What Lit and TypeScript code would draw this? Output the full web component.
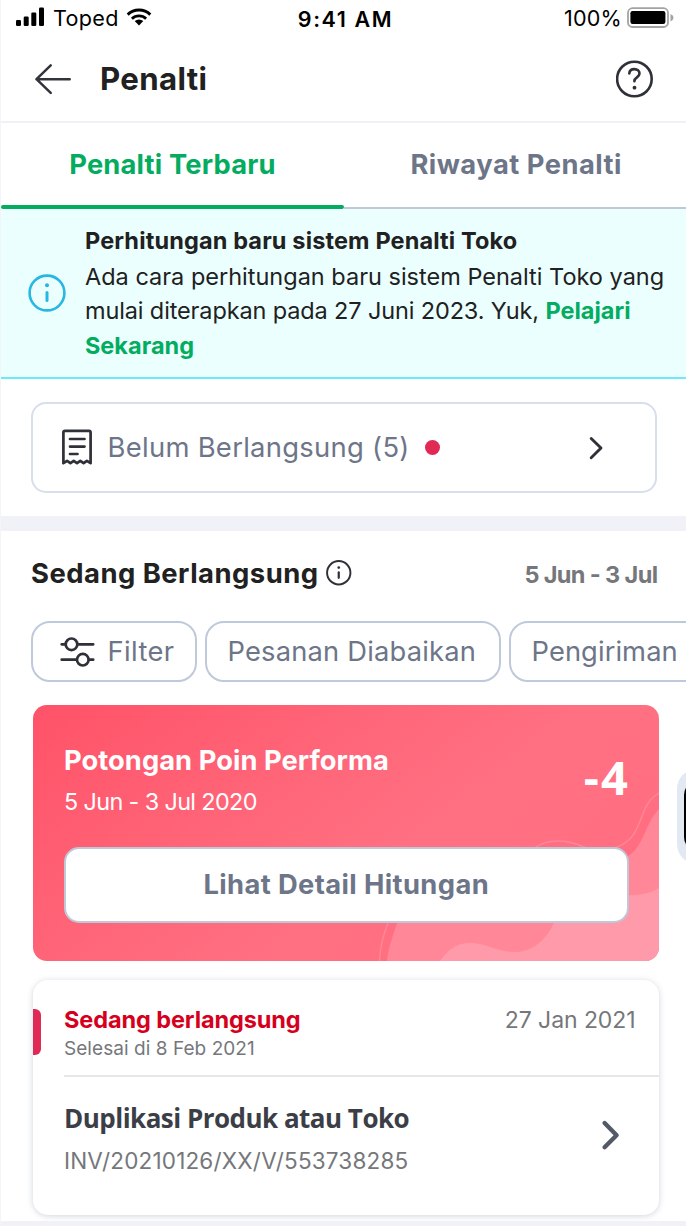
import { LitElement, html, css, svg } from 'lit';
import { customElement, property } from 'lit/decorators.js';

@customElement('status-bar')
class StatusBar extends LitElement {
  static styles = css`
    :host { display: grid; grid-template-columns: 1fr auto 1fr; height: 36px; color: #000; font-size: 21.6px; line-height: 36px; }
    .side { display: flex; align-items: flex-start; }
    .left { padding-left: 15px; }
    .right { justify-content: flex-end; padding-right: 12px; }
    .signal { margin: 7px 8px 0 0; }
    .wifi { margin: 8px 0 0 7px; }
    .carrier { letter-spacing: 0.3px; }
    .time { font-size: 21.5px; font-weight: 600; letter-spacing: 1.6px; line-height: 39px; margin-left: 4px; }
    .battery { margin: 7px 0 0 5px; }
    .percent { letter-spacing: 0.2px; }
    svg { display: block; flex: none; }
  `;
  render() {
    return html`
      <div class="side left">
        <svg class="signal" width="29" height="19" viewBox="0 0 29 19">
          <rect x="0" y="13" width="5" height="6" rx="1.2" />
          <rect x="7.7" y="9.5" width="5" height="9.5" rx="1.2" />
          <rect x="15.3" y="5.5" width="5" height="13.5" rx="1.2" />
          <rect x="23" y="0.5" width="5" height="18.5" rx="1.2" />
        </svg>
        <span class="carrier">Toped</span>
        <svg class="wifi" width="26" height="18" viewBox="0 0 26 18">
          <g fill="none" stroke="#000" stroke-width="2.9">
            <path d="M1.7 6.6a16.2 16.2 0 0 1 22.6 0" />
            <path d="M5.9 10.7a10.4 10.4 0 0 1 14.2 0" />
          </g>
          <path d="M13 17.4 8.7 13.1a6.3 6.3 0 0 1 8.6 0Z" />
        </svg>
      </div>
      <div class="time">9:41 AM</div>
      <div class="side right">
        <span class="percent">100%</span>
        <svg class="battery" width="47" height="21" viewBox="0 0 47 21">
          <rect x="1" y="1.2" width="40" height="18.8" rx="4.5" fill="none" stroke="#a3a3a3" stroke-width="1.8" />
          <rect x="3.4" y="4" width="35" height="13" rx="2.2" />
          <path d="M43.5 7v7.4q3-1.3 3-3.7t-3-3.7Z" fill="#a3a3a3" />
        </svg>
      </div>
    `;
  }
}

@customElement('page-header')
class PageHeader extends LitElement {
  static styles = css`
    :host { display: flex; align-items: center; height: 85px; border-bottom: 2px solid #f0f1f7; padding: 0 32px 0 34px; }
    h1 { flex: 1; margin: 1.5px 0 0 28px; font-size: 31.2px; font-weight: 700; letter-spacing: 0.35px; line-height: 40px; color: #212121; }
    svg { display: block; }
  `;
  render() {
    return html`
      <svg width="37" height="32" viewBox="0 0 37 32" fill="none" stroke="#31353b" stroke-width="2.5" stroke-linecap="round" stroke-linejoin="round">
        <path d="M34.7 16.2H1.5M15.7 2.3 1.5 16.2l14.2 13.7" />
      </svg>
      <h1>Penalti</h1>
      <svg width="38" height="38" viewBox="0 0 38 38" fill="none" stroke="#2e3137" stroke-width="2.6" stroke-linecap="round" stroke-linejoin="round">
        <circle cx="18.4" cy="19" r="17.3" />
        <path d="M13.3 13.4c.2-2.7 2.3-4.3 5-4.3 3 0 5.2 1.8 5.2 4.5 0 4.1-5.1 3.5-5.1 7.6" />
        <circle cx="18.5" cy="27.7" r="1.9" fill="#2e3137" stroke="none" />
      </svg>
    `;
  }
}

@customElement('tab-bar')
class TabBar extends LitElement {
  @property({ type: Array }) tabs: string[] = [];
  static styles = css`
    :host { display: grid; grid-template-columns: 343px 342px; height: 86px; }
    .tab { box-sizing: border-box; padding: 22.4px 0 0 2.4px; border-bottom: 2px solid #bfc7d9; text-align: center; font-size: 27.3px; line-height: 40px; font-weight: 700; letter-spacing: 0.5px; color: #6d7588; display: flex; flex-direction: column; justify-content: space-between; }
    .active { padding-left: 0; color: #03ac5f; letter-spacing: 0.2px; border-bottom: 0; }
    .active::after { content: ''; height: 4px; border-radius: 2px; background: #03ac5f; }
  `;
  render() {
    return html`${this.tabs.map((t, i) => html`<div class="tab ${i === 0 ? 'active' : ''}">${t}</div>`)}`;
  }
}

const infoGlyph = (size: number, stroke: number, color: string) => svg`
  <svg width=${size} height=${size} viewBox="0 0 38 38" fill="none" stroke=${color}>
    <circle cx="19" cy="19" r="17.4" stroke-width=${stroke} />
    <path d="M19 18.6v8" stroke-width=${stroke + 0.4} stroke-linecap="round" />
    <circle cx="19" cy="11.3" r="2" fill=${color} stroke="none" />
  </svg>`;

@customElement('info-banner')
class InfoBanner extends LitElement {
  static styles = css`
    :host { box-sizing: border-box; display: flex; align-items: center; height: 170px; padding: 0 0 0 26.6px; background: #ebffff; border-bottom: 2px solid #6ee8fb; color: #212121; font-size: 23.5px; }
    svg { display: block; flex: none; }
    .copy { margin-left: 19.4px; white-space: nowrap; line-height: 34.2px; }
    .title { font-weight: 700; letter-spacing: 0.14px; line-height: 36px; margin-bottom: 1px; }
    .second { letter-spacing: -0.13px; }
    b { font-weight: 700; color: #03ac5f; letter-spacing: 0; }
  `;
  render() {
    return html`
      ${infoGlyph(38, 2.6, '#27b7e3')}
      <div class="copy">
        <div class="title">Perhitungan baru sistem Penalti Toko</div>
        <div>Ada cara perhitungan baru sistem Penalti Toko yang</div>
        <div class="second">mulai diterapkan pada 27 Juni 2023. Yuk, <b>Pelajari</b></div>
        <div><b>Sekarang</b></div>
      </div>
    `;
  }
}

@customElement('upcoming-row')
class UpcomingRow extends LitElement {
  static styles = css`
    :host { box-sizing: border-box; display: flex; align-items: center; height: 91px; margin: 23px 29px 23px 30px; padding: 0 51px 0 28px; border: 2px solid #d6dfeb; border-radius: 15px; color: #6d7588; font-size: 27.4px; line-height: 40px; }
    svg { display: block; flex: none; }
    .receipt, .label { margin-bottom: 1px; }
    .label { margin-left: 14.5px; letter-spacing: 0.29px; }
    .dot { width: 15.5px; height: 15.5px; margin-left: 15px; border-radius: 50%; background: #e02954; }
    .chevron { margin-left: auto; }
  `;
  render() {
    return html`
      <svg class="receipt" width="32" height="38" viewBox="0 0 32 38" fill="none" stroke="#2e3137" stroke-width="2.7" stroke-linecap="round" stroke-linejoin="round">
        <path d="M2.4 35.2V4.4q0-1.6 1.6-1.6h24q1.6 0 1.6 1.6v30.8l-3.7-2.4-3.3 2.4-3.3-2.4-3.3 2.4-3.3-2.4-3.3 2.4-3.3-2.4Z" />
        <path d="M9 11h14.5M9 18.6h14.5M9 26h7.5" />
      </svg>
      <span class="label">Belum Berlangsung (5)</span>
      <span class="dot"></span>
      <svg class="chevron" width="16" height="24" viewBox="0 0 16 24" fill="none" stroke="#2e3137" stroke-width="2.9" stroke-linecap="round" stroke-linejoin="round">
        <path d="M3.2 2.5 13 12 3.2 21.7" />
      </svg>
    `;
  }
}

@customElement('ongoing-heading')
class OngoingHeading extends LitElement {
  static styles = css`
    :host { box-sizing: border-box; display: flex; align-items: center; height: 86px; padding: 0 28.5px 2px 30px; }
    h2 { margin: 0 7.5px 0 0; font-size: 27.4px; line-height: 40px; letter-spacing: 0.49px; color: #212121; }
    svg { display: block; }
    .range { margin-left: auto; padding-top: 3px; font-size: 23.5px; line-height: 30px; font-weight: 700; letter-spacing: -0.62px; color: #75777b; }
  `;
  render() {
    return html`<h2>Sedang Berlangsung</h2>${infoGlyph(25.5, 2.9, '#2e3137')}<span class="range">5 Jun - 3 Jul</span>`;
  }
}

@customElement('filter-chips')
class FilterChips extends LitElement {
  static styles = css`
    :host { display: flex; gap: 8px; margin: 4px 0 0 30px; overflow: hidden; }
    .chip { box-sizing: border-box; flex: none; display: flex; align-items: center; height: 61px; padding: 0 20.5px; border: 2px solid #bfc9dc; border-radius: 19px; font-size: 27.3px; letter-spacing: 0.2px; color: #6d7588; white-space: nowrap; }
    .filter { width: 166px; padding: 0 0 0 27px; letter-spacing: 0.38px; }
    .wide { width: 296px; }
    .last { width: 200px; letter-spacing: 0.09px; }
    svg { display: block; margin-right: 12.5px; }
  `;
  render() {
    return html`
      <div class="chip filter">
        <svg width="35" height="32" viewBox="0 0 35 32" fill="none" stroke="#2e3137" stroke-width="2.7" stroke-linecap="round">
          <path d="M1.7 8.3h4M17.3 8.3h15.9M1.7 23.7h15M29 23.7h4.2" />
          <circle cx="11.5" cy="8.3" r="5.8" /><circle cx="22.8" cy="23.7" r="5.8" />
        </svg>
        Filter
      </div>
      <div class="chip wide">Pesanan Diabaikan</div>
      <div class="chip last">Pengiriman</div>
    `;
  }
}

@customElement('score-card')
class ScoreCard extends LitElement {
  static styles = css`
    :host { position: relative; box-sizing: border-box; display: block; height: 256px; margin: 23px 27px 0 32px; padding: 35px 30.5px 0 31px; border-radius: 14px; overflow: hidden; background: linear-gradient(142deg, #ff5268 0%, #ff6679 38%, #ff7082 58%, #ff6e80 100%); color: #fff; }
    .waves { position: absolute; inset: 0; }
    .row { position: relative; box-sizing: border-box; display: flex; justify-content: space-between; height: 107px; padding-top: 1px; }
    .title { font-size: 27.3px; font-weight: 700; line-height: 40px; letter-spacing: 0.05px; }
    .date { font-size: 23.4px; line-height: 42px; letter-spacing: -0.63px; }
    .score { font: 700 47px/64px 'Open Sans', sans-serif; letter-spacing: 2.2px; padding-top: 4px; margin-right: -1.6px; }
    .button { position: relative; box-sizing: border-box; height: 76px; border: 2px solid #bfc7d9; border-radius: 15px; background: #fff; color: #6d7588; font-size: 27.3px; font-weight: 700; line-height: 71px; letter-spacing: 0.4px; text-align: center; }
  `;
  render() {
    return html`
      <svg class="waves" width="626" height="256" viewBox="0 0 626 256">
        <path fill="#ff8797" d="M626 104C612 118 610 145 592 153C550 176 480 150 430 165C385 180 370 200 364 218C360 231 355 243 354 256H626Z" />
        <path fill="#ff9aaa" d="M626 183C616 189 604 191 592 190C550 188 535 196 520.7 218C514 234 500 247 482 247C463 247 455 238 437 238C423 238 415 245 407 256H626Z" />
        <path fill="none" stroke="#ff8797" stroke-width="1.4" d="M346.5 256C347 241 351 228 355 218C380 160 470 160 503 142C515 134 534 134 550 141.7C563 145 573 146 585 141.7C613 130 603 101 626 88" />
      </svg>
      <div class="row">
        <div>
          <div class="title">Potongan Poin Performa</div>
          <div class="date">5 Jun - 3 Jul 2020</div>
        </div>
        <div class="score">-4</div>
      </div>
      <div class="button">Lihat Detail Hitungan</div>
    `;
  }
}

@customElement('penalty-card')
class PenaltyCard extends LitElement {
  static styles = css`
    :host { box-sizing: border-box; display: block; height: 235px; margin: 19px 27px 6px 32px; border-radius: 15px; background: #fff; box-shadow: 0 1px 6px rgba(141, 150, 170, 0.4); }
    .top { display: flex; height: 97px; }
    .mark { width: 8px; height: 46px; margin: 29px 23px 0 0; border-radius: 0 6px 6px 0; background: #e02954; }
    .body { flex: 1; display: flex; justify-content: space-between; padding: 25px 23.5px 0 0; border-bottom: 2px solid #e5e7e9; }
    .state { font-size: 23.5px; font-weight: 700; line-height: 30px; letter-spacing: -0.1px; color: #d6001c; }
    .until { font-size: 19px; line-height: 27px; letter-spacing: 0.05px; color: #75777b; }
    .date { font-size: 23px; line-height: 30px; letter-spacing: -0.08px; color: #75777b; }
    .bottom { display: flex; justify-content: space-between; padding: 20.5px 39px 0 31px; }
    .name { font: 700 26px/40px 'Open Sans', sans-serif; letter-spacing: -0.52px; color: #3b3e46; }
    .invoice { font-size: 22.5px; line-height: 46px; letter-spacing: 0.18px; color: #75777b; }
    svg { display: block; margin-top: 21px; }
  `;
  render() {
    return html`
      <div class="top">
        <div class="mark"></div>
        <div class="body">
          <div><div class="state">Sedang berlangsung</div><div class="until">Selesai di 8 Feb 2021</div></div>
          <div class="date">27 Jan 2021</div>
        </div>
      </div>
      <div class="bottom">
        <div><div class="name">Duplikasi Produk atau Toko</div><div class="invoice">INV/20210126/XX/V/553738285</div></div>
        <svg width="19" height="32" viewBox="0 0 19 32" fill="none" stroke="#525a67" stroke-width="4.4" stroke-linecap="round" stroke-linejoin="round">
          <path d="M3.6 4 15.6 16.2 3.6 28.2" />
        </svg>
      </div>
    `;
  }
}

@customElement('app-root')
class AppRoot extends LitElement {
  static styles = css`
    :host { position: relative; box-sizing: border-box; display: block; width: 686px; height: 1226px; overflow: hidden; border-left: 1px solid #f4f5f9; background: #fff; font-family: Inter, 'Liberation Sans', sans-serif; }
    .band { height: 15px; background: #f1f2f7; }
    .floating { position: absolute; top: 769px; left: 676px; box-sizing: border-box; width: 60px; height: 95px; padding: 12px 0 0 7px; border-radius: 20px; background: #e3e9f3; }
    .handle { width: 50px; height: 70px; border-radius: 14px; background: #000; }
  `;
  render() {
    return html`
      <status-bar></status-bar>
      <page-header></page-header>
      <tab-bar .tabs=${['Penalti Terbaru', 'Riwayat Penalti']}></tab-bar>
      <info-banner></info-banner>
      <upcoming-row></upcoming-row>
      <div class="band"></div>
      <ongoing-heading></ongoing-heading>
      <filter-chips></filter-chips>
      <score-card></score-card>
      <penalty-card></penalty-card>
      <div class="band"></div>
      <div class="floating"><div class="handle"></div></div>
    `;
  }
}
